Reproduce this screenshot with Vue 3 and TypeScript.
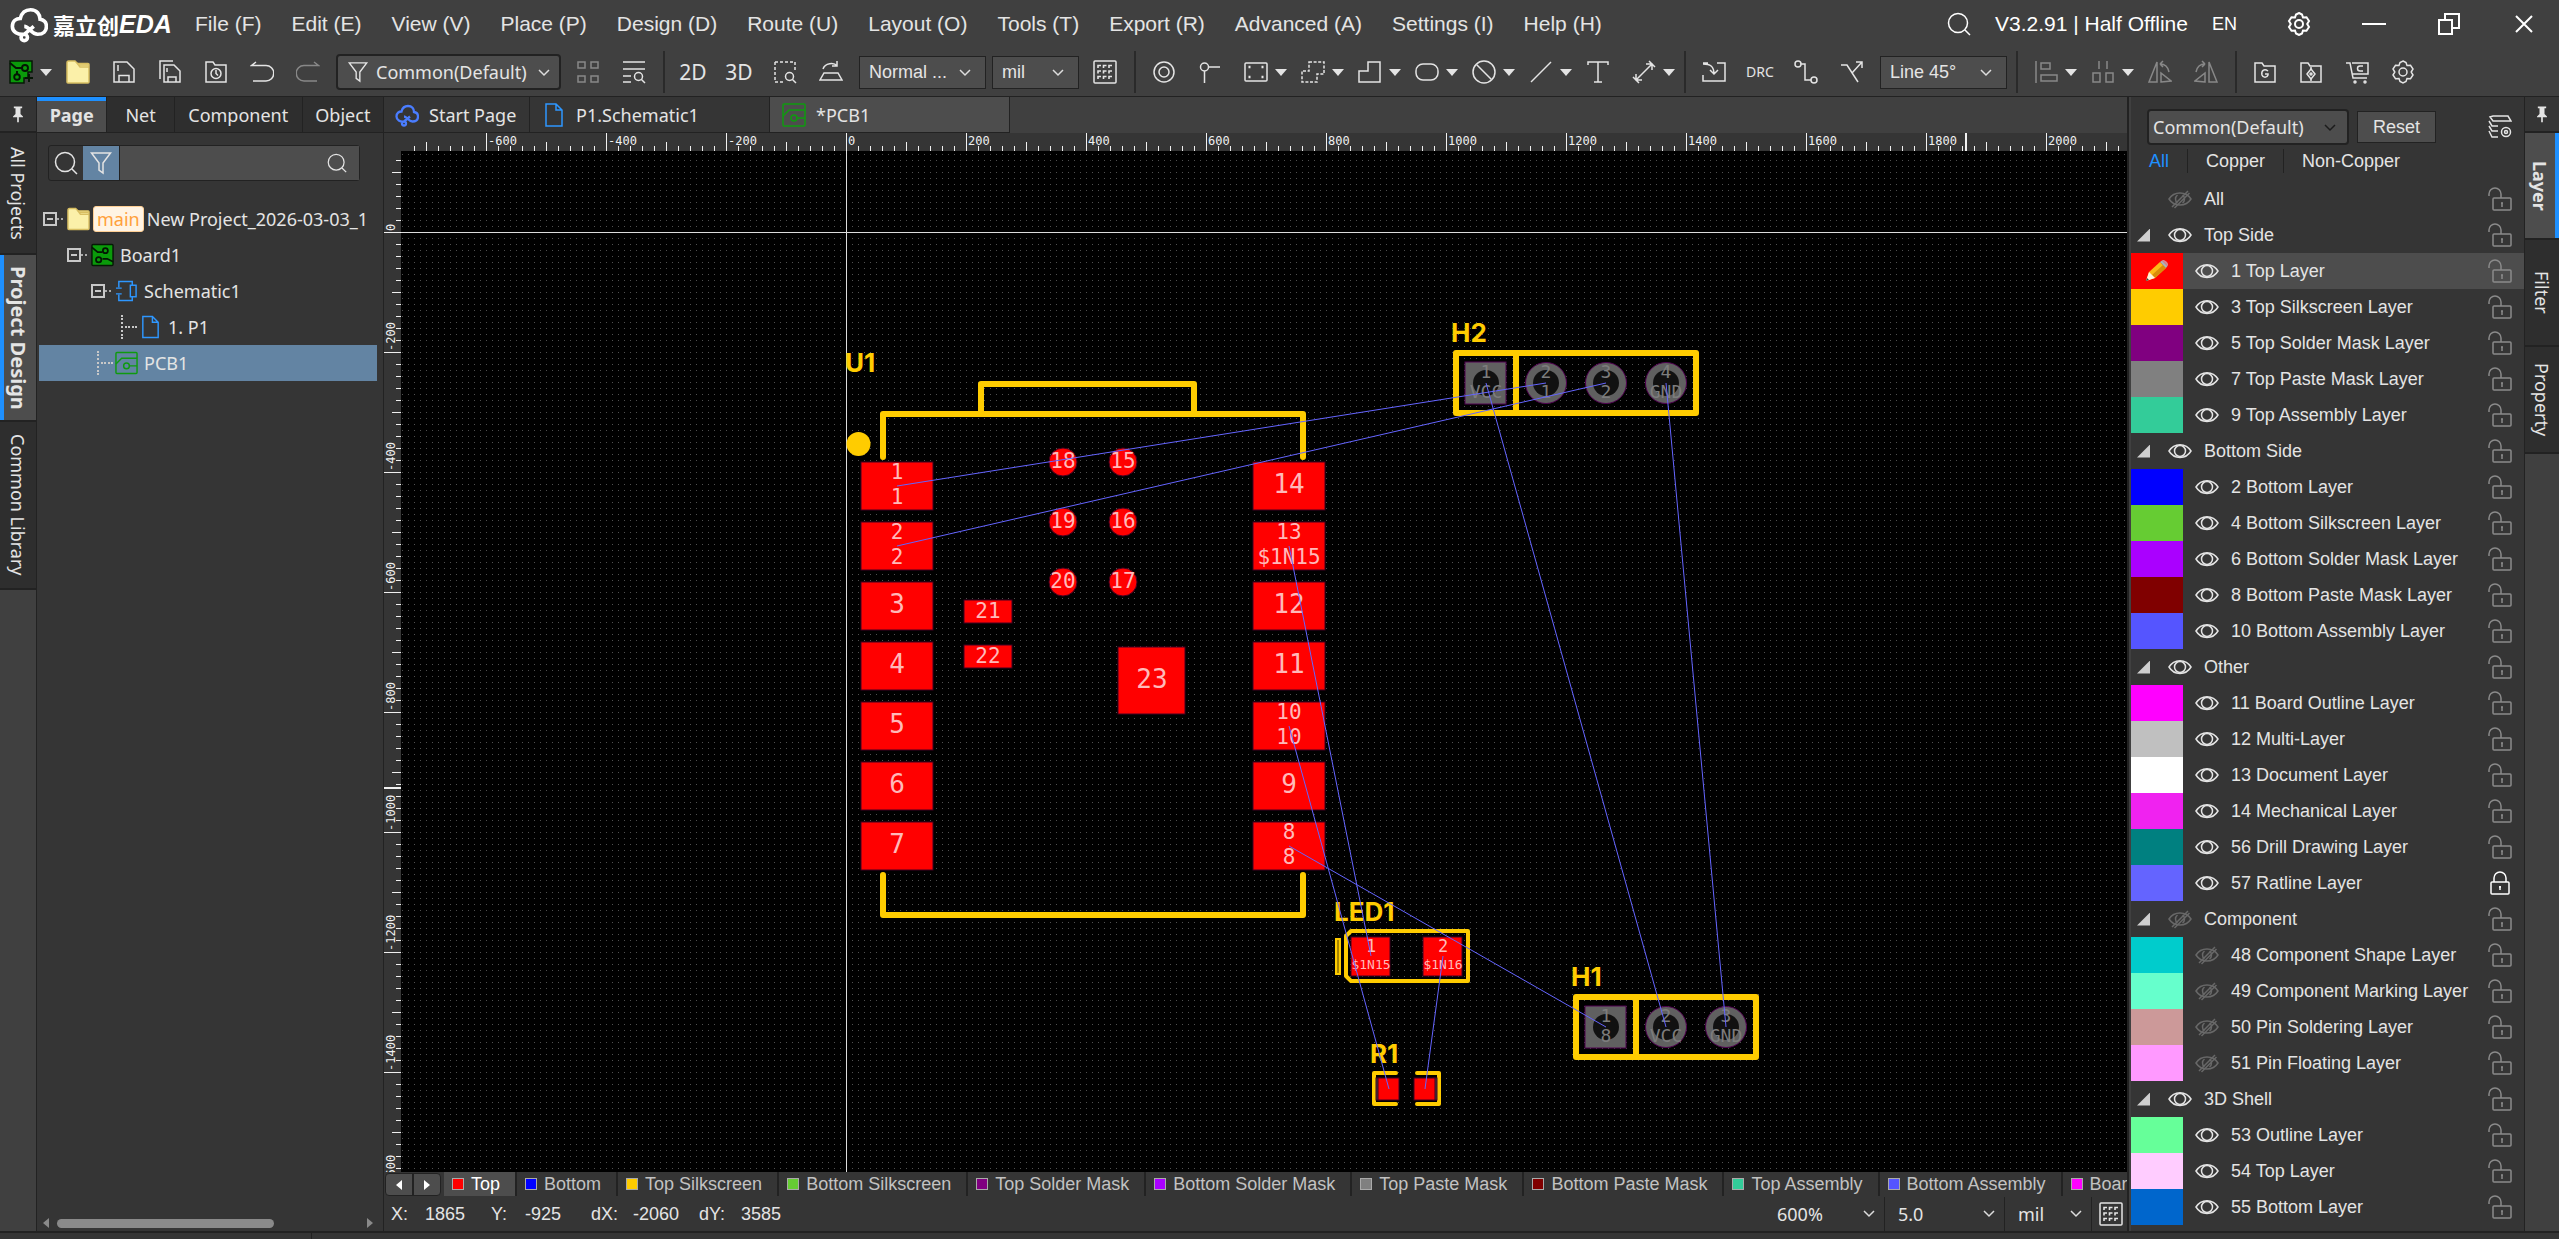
<script setup lang="ts">
import { ref } from 'vue'

const icons: Record<string, string> = {
  board: '<rect x="1" y="1" width="22" height="22" rx="1" fill="#0a9a0a" stroke="#061806"/><g stroke="#041504" stroke-width="1.8"><path d="M1 4l6 5h5M23 19l-6-3h-5"/><circle cx="15" cy="7.500" r="2.600"/><circle cx="8" cy="17" r="2.800"/></g>',
  boardnew: '<path d="M1 1h22v11h-4v6h-4v5H1z" fill="#0a9a0a" stroke="#061806"/><g stroke="#041504" stroke-width="1.900"><path d="M1 3l6 5h6"/><circle cx="16" cy="8" r="3"/><circle cx="8" cy="17" r="2.800"/><path d="M8 14v-3M20 14v8M16 18h8"/></g>',
  folder: '<path d="M1 3c0-1 .6-2 1.600-2h6.400l2.500 2.500H22c.6 0 1 .5 1 1V22c0 .6-.4 1-1 1H2c-.6 0-1-.5-1-1z" fill="#fbf0a9" stroke="#d8be62"/><path d="M12 5h10.500M11 3l3 4h9" stroke="#d8be62"/>',
  save: '<path d="M2 2h13l7 7v13H2zM7 22v-6.500h10V22M6 5v6"/>',
  saveall: '<path d="M6 5h10l6 6v11H6zM10 22v-5h8v5M2 19V1h13M9 8v4"/>',
  history: '<path d="M2 2h7l2 3h11v17H2z"/><circle cx="12" cy="13.500" r="5"/><path d="M12 10v3.500l2 2"/>',
  undo: '<path d="M6 2L1.500 5.500H16a7 7 0 010 15.500H3"/>',
  redo: '<path d="M18 2l4.500 3.500H8A7 7 0 008 21h13"/>',
  filter: '<path d="M2.500 2h19L14 12v10l-4-3v-7z"/>',
  four: '<rect x="2" y="2" width="7" height="6"/><rect x="15" y="2" width="7" height="6"/><rect x="2" y="16" width="7" height="6"/><rect x="15" y="16" width="7" height="6"/>',
  listsearch: '<path d="M1 2h22M1 9h22M1 16h8M1 22h8"/><circle cx="16.500" cy="16.500" r="4"/><path d="M19.500 19.500l3.500 3.500"/>',
  dashsearch: '<path d="M2 2h20v9M2 2v20h8" stroke-dasharray="3 2"/><circle cx="16.500" cy="16.500" r="4"/><path d="M19.500 19.500l3.500 3.500"/>',
  flipboard: '<path d="M5 13h14l4 7H1zM4 9c2-6 11-7 14-3M18 1v5h-5"/>',
  grid: '<rect x="1" y="1" width="22" height="22" rx="1"/><path d="M5 8V5.500h3M10.500 8V5.500h3M16 8V5.500h3M5 13.500V11h3M10.500 13.500V11h3M16 13.500V11h3M5 19v-2.500h3M10.500 19v-2.500h3M16 19v-2.500h3" stroke-width="1.600"/>',
  target: '<circle cx="12" cy="12" r="10"/><circle cx="12" cy="12" r="5"/>',
  pinprobe: '<circle cx="6.500" cy="7" r="4"/><path d="M6.500 11v12M10.500 7H22"/>',
  pad: '<rect x="1" y="3" width="22" height="18" rx="1"/><path d="M4.500 7h2M17.500 7h2M4.500 17h2M17.500 17h2" stroke-width="2.400"/>',
  dashshape: '<path d="M8 2h15v12h-7v8H1V11h7z" stroke-dasharray="3 1.600"/>',
  shape: '<path d="M10 2h12v20H1V11h9z"/>',
  roundrect: '<rect x="1" y="4" width="22" height="16" rx="7"/>',
  forbid: '<circle cx="12" cy="12" r="11"/><path d="M4.500 4.500l15 15"/>',
  line: '<path d="M2 22L22 2"/>',
  text: '<path d="M2 5V2h20v3M12 2v20M8 22h8"/>',
  dimension: '<path d="M4 20L20 4M4 14v6h6M14 4h6v6M1 17l6 6M17 1l6 6"/>',
  import: '<path d="M6 3H1M15 3h8v18H1v-6M1 4c7 0 11 2 11 10M8 10l4 4 4-4"/>',
  route: '<circle cx="4" cy="4" r="3"/><circle cx="20" cy="20" r="3"/><path d="M7 4h4v16h6"/>',
  branch: '<path d="M1 5h6l11 17M12 13L22 2M16 2h6v6"/>',
  align: '<path d="M2 1v22"/><rect x="7" y="3" width="9" height="6"/><rect x="7" y="15" width="16" height="6"/>',
  distribute: '<path d="M8 1v8M16 1v8"/><rect x="2" y="13" width="7" height="9"/><rect x="15" y="13" width="7" height="9"/>',
  fliph: '<path d="M9 2v20H1zM13 22l10-1-10-8zM12 4c5 0 8 3 9 8M12 4l3-3M12 4l3 3"/>',
  flipv: '<path d="M15 2v20h8zM11 22L1 21l10-8zM2 12c1-5 4-8 9-8M11 4L8 1M11 4L8 7"/>',
  gerber: '<path d="M2 3h7l2 3h11v16H2zM15 11c-4-3-7 0-6 4 1 3 5 3 6 0v-1h-3"/>',
  assembly: '<path d="M2 3h7l2 3h11v16H2z"/><path d="M12 9l4 5-4 5-4-5z"/><circle cx="12" cy="14" r="1"/><path d="M12 7v2M12 19v2"/>',
  cart: '<path d="M1 3h4l3 15h14M7 3h16v11H7.500"/><path d="M18 6h-3a2.500 2.500 0 000 5h3"/><circle cx="10" cy="22" r="1"/><circle cx="20" cy="22" r="1"/>',
  gear: '<path d="M12 1l3 1.500 1 3 3.500-.2L22 9l-1.800 3L22 15l-2.500 3.700L16 18.500l-1 3L12 23l-3-1.500-1-3-3.500.2L2 15l1.800-3L2 9l2.500-3.700L8 5.500l1-3z"/><circle cx="12" cy="12" r="4"/>',
  search: '<circle cx="11" cy="11" r="9.500"/><path d="M18 18l5 5"/>',
  min: '<path d="M0 12h24"/>',
  restore: '<path d="M2 8h13v14H2zM8 8V2h14v14h-7"/>',
  close: '<path d="M4 4l16 16M20 4L4 20"/>',
  pin: '<path d="M7 3h10v2h-2v7l3 3v1h-5v6h-2v-6H6v-1l3-3V5H7z" fill="currentColor" stroke="none"/>',
  cloud: '<path d="M9 18.500C5 19 1.500 17 1.500 13.500S4 8.500 6.500 8.500C7.500 4.500 10 3 13 3c4 0 6 3 6 6 3 .5 4 2.500 4 4.500 0 3-2 5-5.500 5-4 0-5.500-5-8.500-5M9 18.500a2 2 0 100 4 2 2 0 000-4zM9 18.500l6-5" stroke-width="2.300"/>',
  doc: '<path d="M4 1h10l6 6v16H4zM14 1v6h6"/>',
  schematic: '<path d="M4 8V2h14v4M4 16v6h14v-4M1 9h6M1 15h6"/><rect x="16" y="6" width="6" height="12"/>',
  pcb: '<rect x="1" y="1" width="22" height="22" rx="1"/><path d="M1 13l6-6h16M15 15h8"/><circle cx="12" cy="15" r="3"/>',
  eye: '<path d="M1 12C6 3.500 18 3.500 23 12 18 20.500 6 20.500 1 12z"/><circle cx="12" cy="12" r="5.500"/>',
  eyeoff: '<path d="M1 12C6 4 18 4 23 12 18 20 6 20 1 12z"/><path d="M9.500 16a5 5 0 010-8M14.500 8a5 5 0 010 8M4 20L20 4M6.500 21L21.500 6"/>',
  unlock: '<rect x="5" y="11" width="18" height="12" rx="1"/><path d="M13 11V7A6 6 0 001 7v2M14 16v4M13 16h2" />',
  lock: '<rect x="3" y="11" width="18" height="12" rx="1"/><path d="M6 11V7a6 6 0 0112 0v4M12 15v4M11 16h2"/>',
  layers: '<path d="M5 1h15l3 5H5L2 2zM1 6l3 5h6M1 11l3 5h6M1 16l3 6h6"/><circle cx="18" cy="17" r="4.500"/><circle cx="18" cy="17" r="1.500"/>',
  chevron: '<path d="M1 2l5 5 5-5"/>',
}

const menus = ['File (F)', 'Edit (E)', 'View (V)', 'Place (P)', 'Design (D)', 'Route (U)', 'Layout (O)', 'Tools (T)', 'Export (R)', 'Advanced (A)', 'Settings (I)', 'Help (H)']

interface Tool { icon?: string; text?: string; caret?: boolean; dim?: boolean; name: string }
const fileTools: Tool[] = [
  { icon: 'folder', name: 'Open' }, { icon: 'save', name: 'Save' }, { icon: 'saveall', name: 'Save all' },
  { icon: 'history', name: 'History' }, { icon: 'undo', name: 'Undo' }, { icon: 'redo', name: 'Redo', dim: true },
]
const findTools: Tool[] = [{ icon: 'four', name: 'Select array', dim: true }, { icon: 'listsearch', name: 'Find' }]
const viewTools: Tool[] = [
  { text: '2D', name: '2D view' }, { text: '3D', name: '3D view' },
  { icon: 'dashsearch', name: 'Find similar' }, { icon: 'flipboard', name: 'Flip board' },
]
const drawTools: Tool[] = [
  { icon: 'target', name: 'Via' }, { icon: 'pinprobe', name: 'Test point' }, { icon: 'pad', name: 'Pad', caret: true },
  { icon: 'dashshape', name: 'Region', caret: true }, { icon: 'shape', name: 'Fill', caret: true },
  { icon: 'roundrect', name: 'Slot', caret: true }, { icon: 'forbid', name: 'Prohibited region', caret: true },
  { icon: 'line', name: 'Line', caret: true }, { icon: 'text', name: 'Text' }, { icon: 'dimension', name: 'Dimension', caret: true },
]
const routeTools: Tool[] = [
  { icon: 'import', name: 'Import changes' }, { text: 'DRC', name: 'Check DRC' },
  { icon: 'route', name: 'Route' }, { icon: 'branch', name: 'Fanout' },
]
const alignTools: Tool[] = [
  { icon: 'align', name: 'Align', caret: true, dim: true }, { icon: 'distribute', name: 'Distribute', caret: true, dim: true },
  { icon: 'fliph', name: 'Rotate left', dim: true }, { icon: 'flipv', name: 'Rotate right', dim: true },
]
const exportTools: Tool[] = [
  { icon: 'gerber', name: 'Gerber' }, { icon: 'assembly', name: 'Pick and place' },
  { icon: 'cart', name: 'Order' }, { icon: 'gear', name: 'Preferences' },
]

interface LayerRow { name: string; color?: string; group?: boolean; all?: boolean; hidden?: boolean; locked?: boolean }
const layers: LayerRow[] = [
  { name: 'All', all: true, hidden: true },
  { name: 'Top Side', group: true },
  { name: '1 Top Layer', color: '#ff0000' },
  { name: '3 Top Silkscreen Layer', color: '#ffcc00' },
  { name: '5 Top Solder Mask Layer', color: '#800080' },
  { name: '7 Top Paste Mask Layer', color: '#808080' },
  { name: '9 Top Assembly Layer', color: '#33cc99' },
  { name: 'Bottom Side', group: true },
  { name: '2 Bottom Layer', color: '#0000ff' },
  { name: '4 Bottom Silkscreen Layer', color: '#66cc33' },
  { name: '6 Bottom Solder Mask Layer', color: '#aa00ff' },
  { name: '8 Bottom Paste Mask Layer', color: '#800000' },
  { name: '10 Bottom Assembly Layer', color: '#5555ff' },
  { name: 'Other', group: true },
  { name: '11 Board Outline Layer', color: '#ff00ff' },
  { name: '12 Multi-Layer', color: '#c0c0c0' },
  { name: '13 Document Layer', color: '#ffffff' },
  { name: '14 Mechanical Layer', color: '#f022f0' },
  { name: '56 Drill Drawing Layer', color: '#008080' },
  { name: '57 Ratline Layer', color: '#6464ff', locked: true },
  { name: 'Component', group: true, hidden: true },
  { name: '48 Component Shape Layer', color: '#00cccc', hidden: true },
  { name: '49 Component Marking Layer', color: '#66ffcc', hidden: true },
  { name: '50 Pin Soldering Layer', color: '#cc9999', hidden: true },
  { name: '51 Pin Floating Layer', color: '#ff99ff', hidden: true },
  { name: '3D Shell', group: true },
  { name: '53 Outline Layer', color: '#66ff99' },
  { name: '54 Top Layer', color: '#ffccff' },
  { name: '55 Bottom Layer', color: '#0066cc' },
]
const activeLayer = ref('1 Top Layer')

const layerTabs = [
  { name: 'Top', color: '#ff0000' }, { name: 'Bottom', color: '#0000ff' },
  { name: 'Top Silkscreen', color: '#ffcc00' }, { name: 'Bottom Silkscreen', color: '#66cc33' },
  { name: 'Top Solder Mask', color: '#800080' }, { name: 'Bottom Solder Mask', color: '#aa00ff' },
  { name: 'Top Paste Mask', color: '#808080' }, { name: 'Bottom Paste Mask', color: '#800000' },
  { name: 'Top Assembly', color: '#33cc99' }, { name: 'Bottom Assembly', color: '#5555ff' },
  { name: 'Board Outline', color: '#ff00ff' },
]

// Board drawing, in pixels from the board origin.
const range = (from: number, to: number) => Array.from({ length: to - from + 1 }, (_, i) => from + i)
const tickLength = (k: number, full: number) => (k % 10 === 0 ? full : k % 5 === 0 ? 9 : 5)
const xTicks = range(-36, 300)
const yTicks = range(-6, 200)
const xLabels = range(-3, 10)
const yLabels = range(0, 8)

interface Pad { x: number; y: number; w: number; h: number; lines: string[] }
const sidePad = (x: number, row: number, ...lines: string[]): Pad => ({ x, y: 230 + row * 60, w: 72, h: 48, lines })
const pads: Pad[] = [
  sidePad(15, 0, '1', '1'), sidePad(15, 1, '2', '2'), sidePad(15, 2, '3'), sidePad(15, 3, '4'),
  sidePad(15, 4, '5'), sidePad(15, 5, '6'), sidePad(15, 6, '7'),
  sidePad(407, 0, '14'), sidePad(407, 1, '13', '$1N15'), sidePad(407, 2, '12'), sidePad(407, 3, '11'),
  sidePad(407, 4, '10', '10'), sidePad(407, 5, '9'), sidePad(407, 6, '8', '8'),
]
const roundPads = [
  { x: 217, y: 230, n: '18' }, { x: 277, y: 230, n: '15' }, { x: 217, y: 290, n: '19' },
  { x: 277, y: 290, n: '16' }, { x: 217, y: 350, n: '20' }, { x: 277, y: 350, n: '17' },
]
const ledPads = [{ x: 505, n: '1', net: '$1N15' }, { x: 577, n: '2', net: '$1N16' }]
const holes = [
  { x: 640, y: 151, n: '1', net: 'VCC', square: true }, { x: 700, y: 151, n: '2', net: '1' },
  { x: 760, y: 151, n: '3', net: '2' }, { x: 820, y: 151, n: '4', net: 'GND' },
  { x: 760, y: 795, n: '1', net: '8', square: true }, { x: 820, y: 795, n: '2', net: 'VCC' },
  { x: 880, y: 795, n: '3', net: 'GND' },
]
const designators = [
  { t: 'U1', x: -1, y: 140 }, { t: 'H2', x: 605, y: 110 }, { t: 'LED1', x: 488, y: 689 },
  { t: 'H1', x: 725, y: 754 }, { t: 'R1', x: 524, y: 831 },
]
const ratlines = [
  [51, 254, 700, 151], [51, 314, 760, 151], [443, 314, 525, 724], [443, 494, 543, 857],
  [443, 614, 760, 795], [640, 151, 820, 795], [820, 151, 880, 795], [597, 724, 579, 857],
]
</script>

<template>
  <div class="app">
    <header class="titlebar">
      <div class="logo">
        <svg class="logo-cloud" viewBox="0 0 24 24" v-html="icons.cloud"></svg>
        <span class="logo-cn">嘉立创</span><span class="logo-eda">EDA</span>
      </div>
      <nav class="menus">
        <button v-for="m in menus" :key="m" type="button">{{ m }}</button>
      </nav>
      <div class="title-right">
        <button type="button" aria-label="Search"><svg class="ic" viewBox="0 0 24 24" v-html="icons.search"></svg></button>
        <span class="version">V3.2.91 | Half Offline</span>
        <button type="button" class="lang">EN</button>
        <button type="button" aria-label="Settings" class="win"><svg class="ic bold" viewBox="0 0 24 24" v-html="icons.gear"></svg></button>
        <button type="button" aria-label="Minimize" class="win"><svg class="ic bold" viewBox="0 0 24 24" v-html="icons.min"></svg></button>
        <button type="button" aria-label="Restore" class="win"><svg class="ic bold" viewBox="0 0 24 24" v-html="icons.restore"></svg></button>
        <button type="button" aria-label="Close" class="win"><svg class="ic bold" viewBox="0 0 24 24" v-html="icons.close"></svg></button>
      </div>
    </header>

    <div class="toolbar">
      <button type="button" class="tool new" aria-label="New"><svg class="ic" viewBox="0 0 24 24" v-html="icons.boardnew"></svg><i class="caret"></i></button>
      <button v-for="t in fileTools" :key="t.name" type="button" class="tool" :class="{ dim: t.dim }" :aria-label="t.name"><svg class="ic" viewBox="0 0 24 24" v-html="icons[t.icon!]"></svg></button>
      <label class="pick filterpick">
        <svg class="ic" viewBox="0 0 24 24" v-html="icons.filter"></svg>
        <select aria-label="Filter"><option>Common(Default)</option></select>
        <svg class="chev" viewBox="0 0 12 9" v-html="icons.chevron"></svg>
      </label>
      <button v-for="t in findTools" :key="t.name" type="button" class="tool" :class="{ dim: t.dim }" :aria-label="t.name"><svg class="ic" viewBox="0 0 24 24" v-html="icons[t.icon!]"></svg></button>
      <i class="sep"></i>
      <button v-for="t in viewTools" :key="t.name" type="button" class="tool" :aria-label="t.name">
        <span v-if="t.text" class="tool-text">{{ t.text }}</span>
        <svg v-else class="ic" viewBox="0 0 24 24" v-html="icons[t.icon!]"></svg>
      </button>
      <label class="pick box wide"><select aria-label="View mode"><option>Normal ...</option></select><svg class="chev" viewBox="0 0 12 9" v-html="icons.chevron"></svg></label>
      <label class="pick box narrow"><select aria-label="Unit"><option>mil</option></select><svg class="chev" viewBox="0 0 12 9" v-html="icons.chevron"></svg></label>
      <button type="button" class="tool" aria-label="Grid"><svg class="ic" viewBox="0 0 24 24" v-html="icons.grid"></svg></button>
      <i class="sep"></i>
      <button v-for="t in drawTools" :key="t.name" type="button" class="tool" :class="{ more: t.caret }" :aria-label="t.name"><svg class="ic" viewBox="0 0 24 24" v-html="icons[t.icon!]"></svg><i v-if="t.caret" class="caret"></i></button>
      <i class="sep"></i>
      <button v-for="t in routeTools" :key="t.name" type="button" class="tool" :aria-label="t.name">
        <span v-if="t.text" class="tool-text small">{{ t.text }}</span>
        <svg v-else class="ic" viewBox="0 0 24 24" v-html="icons[t.icon!]"></svg>
      </button>
      <label class="pick box wide"><select aria-label="Route corner"><option>Line 45°</option></select><svg class="chev" viewBox="0 0 12 9" v-html="icons.chevron"></svg></label>
      <i class="sep"></i>
      <button v-for="t in alignTools" :key="t.name" type="button" class="tool" :class="{ more: t.caret, dim: t.dim }" :aria-label="t.name"><svg class="ic" viewBox="0 0 24 24" v-html="icons[t.icon!]"></svg><i v-if="t.caret" class="caret"></i></button>
      <i class="sep"></i>
      <button v-for="t in exportTools" :key="t.name" type="button" class="tool" :aria-label="t.name"><svg class="ic" viewBox="0 0 24 24" v-html="icons[t.icon!]"></svg></button>
    </div>

    <main class="body">
      <nav class="rail left">
        <button type="button" class="pin" aria-label="Pin panel"><svg class="ic" viewBox="0 0 24 24" v-html="icons.pin"></svg></button>
        <button type="button" class="vtab t1">All Projects</button>
        <button type="button" class="vtab t2 on">Project Design</button>
        <button type="button" class="vtab t3">Common Library</button>
      </nav>

      <aside class="project">
        <nav class="ptabs">
          <button type="button" class="p1 on">Page</button>
          <button type="button" class="p2">Net</button>
          <button type="button" class="p3">Component</button>
          <button type="button" class="p4">Object</button>
        </nav>
        <div class="searchbar">
          <button type="button" aria-label="Search mode"><svg class="ic" viewBox="0 0 24 24" v-html="icons.search"></svg></button>
          <button type="button" class="on" aria-label="Filter mode"><svg class="ic" viewBox="0 0 24 24" v-html="icons.filter"></svg></button>
          <label><input type="text" aria-label="Filter"><svg class="ic sm" viewBox="0 0 24 24" v-html="icons.search"></svg></label>
        </div>
        <ul class="tree">
          <li class="l0"><i class="expand"></i><svg class="ic" viewBox="0 0 24 24" v-html="icons.folder"></svg><span class="badge">main</span><span>New Project_2026-03-03_1</span></li>
          <li class="l1"><i class="expand"></i><svg class="ic" viewBox="0 0 24 24" v-html="icons.board"></svg><span class="label">Board1</span></li>
          <li class="l2"><i class="expand"></i><svg class="ic blue" viewBox="0 0 24 24" v-html="icons.schematic"></svg><span class="label">Schematic1</span></li>
          <li class="l3"><i class="branch"></i><svg class="ic blue" viewBox="0 0 24 24" v-html="icons.doc"></svg><span class="label">1. P1</span></li>
          <li class="l2 on"><i class="branch"></i><svg class="ic green" viewBox="0 0 24 24" v-html="icons.pcb"></svg><span class="label">PCB1</span></li>
        </ul>
        <div class="hscroll"><i class="arr lft"></i><i class="track"><i class="thumb"></i></i><i class="arr rgt"></i></div>
      </aside>

      <section class="editor">
        <nav class="ftabs">
          <button type="button" class="start"><svg class="ic indigo" viewBox="0 0 24 24" v-html="icons.cloud"></svg>Start Page</button>
          <button type="button" class="file"><svg class="ic blue" viewBox="0 0 24 24" v-html="icons.doc"></svg>P1.Schematic1</button>
          <button type="button" class="file on"><svg class="ic green" viewBox="0 0 24 24" v-html="icons.pcb"></svg>*PCB1</button>
        </nav>
        <svg class="ruler-x">
          <g transform="translate(462 0)">
            <rect v-for="k in xTicks" :key="k" :x="k * 12" :y="18 - tickLength(k, 18)" width="1" :height="tickLength(k, 18)" />
            <text v-for="k in xLabels" :key="'t' + k" :x="k * 120 + 2" y="12">{{ k * 200 }}</text>
            <rect x="1119" y="0" width="2" height="18" />
          </g>
        </svg>
        <div class="stage">
          <svg class="ruler-y">
            <g transform="translate(0 81)">
              <rect v-for="k in yTicks" :key="k" :x="17 - tickLength(k, 17)" :y="k * 12" :width="tickLength(k, 17)" height="1" />
              <text v-for="k in yLabels" :key="'t' + k" :transform="`translate(11 ${k * 120 - 1}) rotate(-90)`">{{ -k * 200 || 0 }}</text>
              <rect x="0" y="555" width="17" height="2" />
            </g>
          </svg>
          <svg class="canvas">
            <defs>
              <pattern id="dots" width="6" height="6" x="445" y="81" patternUnits="userSpaceOnUse">
                <rect width="1" height="1" fill="#505050" />
              </pattern>
            </defs>
            <rect width="100%" height="100%" fill="url(#dots)" />
            <rect x="445" y="0" width="1" height="100%" fill="#dcdcdc" />
            <rect x="0" y="81" width="100%" height="1" fill="#dcdcdc" />
            <g transform="translate(445 81)">
              <g class="silk">
                <path d="M37 225V182H457V225M135 182V152H348V182M37 643V683H457V643" />
                <rect x="610" y="121" width="240" height="60" /><path d="M670 121V181" />
                <rect x="730" y="765" width="180" height="60" /><path d="M790 765V825" />
                <path class="thin" d="M505 699H622V749H505L500 744V704Z" />
                <path class="thin" d="M550 841H528V872H550M571 841H593V872H571" />
                <rect x="490" y="707" width="4" height="35" class="bar" />
                <circle cx="12.500" cy="212" r="12" class="dot" />
              </g>
              <g class="copper">
                <rect v-for="(p, i) in pads" :key="i" :x="p.x" :y="p.y" :width="p.w" :height="p.h" />
                <circle v-for="p in roundPads" :key="p.n" :cx="p.x" :cy="p.y" r="14" />
                <rect x="118" y="368" width="48" height="23" /><rect x="118" y="413" width="48" height="23" />
                <rect x="272" y="415" width="67" height="67" />
                <rect v-for="p in ledPads" :key="p.n" :x="p.x" y="705" width="39" height="39" />
                <rect x="530" y="846" width="4" height="22" class="mask" /><rect x="587" y="846" width="4" height="22" class="mask" />
                <rect x="532" y="846" width="21" height="22" /><rect x="568" y="846" width="21" height="22" />
              </g>
              <g class="padtext">
                <template v-for="(p, i) in pads" :key="i">
                  <text v-if="p.lines.length === 1" :x="p.x + 36" :y="p.y + 31" class="big">{{ p.lines[0] }}</text>
                  <template v-else>
                    <text :x="p.x + 36" :y="p.y + 17">{{ p.lines[0] }}</text>
                    <text :x="p.x + 36" :y="p.y + 42">{{ p.lines[1] }}</text>
                  </template>
                </template>
                <text v-for="p in roundPads" :key="p.n" :x="p.x" :y="p.y + 6">{{ p.n }}</text>
                <text x="142" y="386">21</text><text x="142" y="431">22</text>
                <text x="306" y="456" class="big">23</text>
                <template v-for="p in ledPads" :key="p.n">
                  <text :x="p.x + 20" y="720" class="mid">{{ p.n }}</text>
                  <text :x="p.x + 20" y="737" class="tiny">{{ p.net }}</text>
                </template>
              </g>
              <g v-for="(h, i) in holes" :key="i" class="hole">
                <rect v-if="h.square" :x="h.x - 21" :y="h.y - 21" width="41" height="42" />
                <circle v-else :cx="h.x" :cy="h.y" r="20.500" />
                <circle :cx="h.x" :cy="h.y" r="13" class="drill" />
                <text :x="h.x" :y="h.y - 5">{{ h.n }}</text>
                <text :x="h.x" :y="h.y + 15">{{ h.net }}</text>
              </g>
              <text v-for="d in designators" :key="d.t" :x="d.x" :y="d.y" class="designator">{{ d.t }}</text>
              <g class="rat"><line v-for="(r, i) in ratlines" :key="i" :x1="r[0]" :y1="r[1]" :x2="r[2]" :y2="r[3]" /></g>
            </g>
          </svg>
        </div>
        <div class="ltabs">
          <div class="nudge"><button type="button" aria-label="Scroll left"><i class="arr lft"></i></button><button type="button" aria-label="Scroll right"><i class="arr rgt"></i></button></div>
          <button v-for="(t, i) in layerTabs" :key="t.name" type="button" class="ltab" :class="{ on: i === 0 }"><i class="sw" :style="{ background: t.color }"></i>{{ t.name }}</button>
        </div>
        <div class="status">
          <span class="k x">X:</span><span class="v">1865</span>
          <span class="k y">Y:</span><span class="v">-925</span>
          <span class="k d">dX:</span><span class="v">-2060</span>
          <span class="k d">dY:</span><span class="v">3585</span>
          <label class="pick flat zoom"><select aria-label="Zoom"><option>600%</option></select><svg class="chev" viewBox="0 0 12 9" v-html="icons.chevron"></svg></label>
          <label class="pick flat snap"><select aria-label="Snap size"><option>5.0</option></select><svg class="chev" viewBox="0 0 12 9" v-html="icons.chevron"></svg></label>
          <label class="pick flat unit"><select aria-label="Status unit"><option>mil</option></select><svg class="chev" viewBox="0 0 12 9" v-html="icons.chevron"></svg></label>
          <button type="button" class="gridbtn" aria-label="Grid settings"><svg class="ic" viewBox="0 0 24 24" v-html="icons.grid"></svg></button>
        </div>
      </section>

      <aside class="layerpanel">
        <div class="lhead">
          <label class="pick preset"><select aria-label="Layer preset"><option>Common(Default)</option></select><svg class="chev dark" viewBox="0 0 12 9" v-html="icons.chevron"></svg></label>
          <button type="button" class="reset">Reset</button>
          <button type="button" class="lset" aria-label="Layer settings"><svg class="ic" viewBox="0 0 24 24" v-html="icons.layers"></svg></button>
        </div>
        <nav class="lfilter">
          <button type="button" class="on">All</button><button type="button">Copper</button><button type="button">Non-Copper</button>
        </nav>
        <ul class="layers">
          <li v-for="l in layers" :key="l.name" :class="{ on: l.name === activeLayer }" @click="l.color && (activeLayer = l.name)">
            <i v-if="l.color" class="swatch" :style="{ background: l.color }">
              <svg v-if="l.name === activeLayer" class="pencil" viewBox="0 0 24 24">
                <path d="M1 22l3-9L15 3l6 6L10 19z" fill="#fbb917" /><path d="M7 16L18 6l3 3L10 19z" fill="#d98b0b" />
                <path d="M1 22l3-9 6 6z" fill="#fff0dc" /><path d="M1 22l1-3 2 2z" fill="#3a3a3a" />
                <path d="M15 3l2-1.500 5.500 5.500L21 9z" fill="#a8b4bc" /><path d="M17 1.500C19-.5 25 5 22.500 7z" fill="#d98a94" />
              </svg>
            </i>
            <i v-else class="fold" :class="{ none: l.all }"></i>
            <button type="button" class="eye" :class="{ off: l.hidden }" :aria-label="'Show ' + l.name"><svg class="ic" viewBox="0 0 24 24" v-html="l.hidden ? icons.eyeoff : icons.eye"></svg></button>
            <span>{{ l.name }}</span>
            <button type="button" class="lock" :class="{ locked: l.locked }" :aria-label="'Lock ' + l.name"><svg class="ic" viewBox="0 0 24 24" v-html="l.locked ? icons.lock : icons.unlock"></svg></button>
          </li>
        </ul>
      </aside>

      <nav class="rail right">
        <button type="button" class="pin" aria-label="Pin panel"><svg class="ic" viewBox="0 0 24 24" v-html="icons.pin"></svg></button>
        <button type="button" class="vtab on">Layer</button>
        <button type="button" class="vtab">Filter</button>
        <button type="button" class="vtab">Property</button>
      </nav>
    </main>
    <footer class="dock"><i></i></footer>
  </div>
</template>

<style>
body { background: #404040; }
svg.ic { width: 24px; height: 24px; fill: none; stroke: currentColor; stroke-width: 1.5; flex: none; display: block; }
</style>

<style scoped>
.app {
  --bar: #404040; --panel: #353535; --on: #4d4d4d; --off: #2e2e2e; --edge: #222; --fg: #e4e4e4; --blue: #1e90ff;
  --ui: "Noto Sans", sans-serif;
  display: flex; flex-direction: column; min-height: 100vh; background: var(--bar); color: var(--fg);
  font: 18px/24px "Liberation Sans", Arial, sans-serif; white-space: nowrap; overflow: hidden;
}
.app, .app *, .app *::before, .app *::after { box-sizing: border-box; }
button { border: 0; padding: 0; margin: 0; background: none; color: inherit; font: inherit; white-space: nowrap; }
ul { list-style: none; margin: 0; padding: 0; }
svg.bold { stroke-width: 2; }
svg.sm { width: 20px; height: 20px; }
svg.blue { color: #2e97ff; }
svg.green { color: #0f9a0f; }
svg.indigo { color: #4a7dff; }

.titlebar { display: flex; align-items: center; height: 48px; padding: 0 23px 0 10px; }
.logo { display: flex; align-items: center; width: 170px; color: #fff; }
.logo-cloud { width: 38px; height: 38px; fill: none; stroke: currentColor; margin-right: 5px; }
.logo-cn { font: 700 22px/30px "Noto Sans CJK SC", sans-serif; }
.logo-eda { font: italic 700 25px/30px "Liberation Sans", Arial, sans-serif; }
.menus { display: flex; font-size: 21px; }
.menus button { padding: 0 15px; }
.title-right { display: flex; align-items: center; margin-left: auto; color: #fff; font-size: 21px; }
.version { margin: 0 24px; }
.lang { font-size: 18px; margin-right: 24px; }
.win { width: 24px; margin-left: 51px; }
.lang + .win { margin-left: 26px; }

.toolbar { display: flex; align-items: center; height: 49px; border-bottom: 1px solid var(--edge); }
.tool { display: flex; align-items: center; justify-content: center; width: 46px; height: 40px; flex: none; }
.tool.new { width: 55px; padding-left: 9px; justify-content: flex-start; gap: 7px; }
.tool.more { width: 57px; padding-left: 11px; justify-content: flex-start; gap: 7px; }
.tool.dim svg { color: #888; }
.tool-text { font: 21px/24px var(--ui); }
.tool-text.small { font-size: 14px; }
.caret { width: 0; height: 0; border: 6px solid transparent; border-top: 7px solid #e4e4e4; border-bottom: 0; }
.sep { width: 2px; height: 42px; background: #2a2a2a; margin: 0 5px 0 6px; flex: none; }
.pick { display: flex; align-items: center; position: relative; background: var(--on); border: 1px solid var(--edge); flex: none; font-size: 18px; }
.pick select { appearance: none; border: 0; background: none; color: inherit; font: inherit; width: 100%; height: 100%; padding: 0; margin: 0; }
.chev { position: absolute; right: 14px; top: 0; bottom: 0; margin: auto 0; width: 12px; height: 9px; fill: none; stroke: #ddd; stroke-width: 1.5; pointer-events: none; }
.chev.dark { stroke: #1c1c1c; }
.filterpick { width: 225px; height: 36px; margin: 0 4px 0 5px; padding-left: 9px; gap: 7px; border: 2px solid var(--edge); border-radius: 4px; font-family: var(--ui); }
.filterpick .chev { right: 9px; }
.filterpick svg.ic { width: 22px; }
.box { height: 33px; padding-left: 9px; }
.box.wide { width: 127px; margin: 0 3px 0 5px; }
.box.narrow { width: 87px; margin: 0 3px; }

.body { display: flex; flex: 1; }
.rail { display: flex; flex-direction: column; font-family: var(--ui); background: var(--bar); }
.rail.left { width: 37px; border-right: 1px solid var(--edge); }
.rail.right { width: 35px; border-left: 1px solid var(--edge); }
.pin { display: flex; align-items: center; justify-content: center; height: 36px; background: var(--panel); border-bottom: 2px solid var(--edge); }
.pin svg.ic { width: 20px; height: 20px; }
.vtab { writing-mode: vertical-rl; background: var(--off); border-bottom: 2px solid var(--edge); width: 100%; display: flex; align-items: center; justify-content: center; height: 107px; }
.t1 { height: 122px; } .t2 { height: 167px; } .t3 { height: 168px; }
.vtab.on { background: var(--on); font-weight: 700; }
.left .vtab.on { box-shadow: inset 4px 0 0 var(--blue); font-size: 20px; }
.right .vtab.on { box-shadow: inset -4px 0 0 var(--blue); padding-right: 4px; }

.project { display: flex; flex-direction: column; width: 347px; background: var(--panel); border-right: 1px solid var(--edge); }
.ptabs { display: flex; height: 36px; border-bottom: 1px solid var(--edge); font-family: var(--ui); }
.ptabs button { background: var(--off); border-right: 1px solid var(--edge); }
.ptabs .p1 { flex: 70; } .ptabs .p2 { flex: 67; } .ptabs .p3 { flex: 128; } .ptabs .p4 { flex: 81; border-right: 0; }
.ptabs button.on { background: var(--on); box-shadow: inset 0 4px 0 var(--blue); font-weight: 700; }
.searchbar { display: flex; height: 36px; margin: 12px 23px 0 11px; border: 1px solid var(--edge); border-radius: 3px; }
.searchbar button { width: 34px; display: flex; align-items: center; justify-content: center; flex: none; }
.searchbar button.on { width: 36px; background: #6384a3; }
.searchbar label { display: flex; flex: 1; min-width: 0; align-items: center; background: var(--on); border-left: 1px solid var(--edge); padding-right: 12px; }
.searchbar input { flex: 1; width: 0; min-width: 0; height: 100%; border: 0; background: none; color: inherit; font: inherit; }
.tree { margin: 20px 6px 0 2px; font-family: var(--ui); overflow: hidden; }
.tree li { display: flex; align-items: center; height: 36px; }
.l0 { padding-left: 4px; } .l1 { padding-left: 28px; } .l2 { padding-left: 52px; } .l3 { padding-left: 76px; }
.tree li.on { background: #6384a3; }
.tree svg.ic { width: 23px; }
.label { margin-left: 6px; }
.badge { background: #fff4e4; border: 1px solid #ffcf94; border-radius: 3px; color: #ffa13b; height: 26px; padding: 0 3px; margin: 0 3px; }
.expand { width: 14px; height: 14px; margin-right: 10px; border: 2px solid #c8c8c8; position: relative; flex: none; }
.expand::before { content: ""; position: absolute; left: 2px; top: 4px; width: 6px; height: 2px; background: #c8c8c8; }
.expand::after { content: ""; position: absolute; left: 12px; top: 4px; width: 6px; border-top: 2px dotted #aaa; }
.branch { width: 14px; height: 24px; margin: 0 4px 0 6px; border-left: 2px dotted #c8c8c8; position: relative; flex: none; }
.branch::after { content: ""; position: absolute; left: 2px; top: 11px; width: 12px; border-top: 2px dotted #c8c8c8; }
.hscroll { display: flex; align-items: center; gap: 8px; margin: auto 10px 3px 6px; }
.track { flex: 1; }
.thumb { display: block; width: 72%; height: 9px; border-radius: 5px; background: #8a8a8a; }
.arr { display: block; width: 0; height: 0; border: 5px solid transparent; }
.arr.lft { border-right: 6px solid #8a8a8a; border-left: 0; }
.arr.rgt { border-left: 6px solid #8a8a8a; border-right: 0; }

.editor { display: flex; flex-direction: column; flex: 1; min-width: 0; background: var(--panel); overflow: hidden; }
.ftabs { display: flex; height: 36px; background: var(--bar); font-family: var(--ui); }
.ftabs button { display: flex; align-items: center; gap: 10px; background: var(--panel); border-right: 1px solid var(--edge); border-bottom: 1px solid var(--edge); padding-left: 11px; flex: none; }
.start { width: 146px; }
.file { width: 240px; }
.ftabs .file { padding-left: 12px; }
.ftabs .on { background: var(--on); }
.ruler-x { display: block; width: 100%; height: 18px; flex: none; fill: #f0f0f0; font: 12px "DejaVu Sans Mono", monospace; }
.stage { display: flex; flex: 1; min-height: 600px; }
.ruler-y { width: 17px; flex: none; height: auto; fill: #f0f0f0; font: 12px "DejaVu Sans Mono", monospace; }
.canvas { flex: 1; min-width: 0; height: auto; background: #000; }
.silk { fill: none; stroke: #ffcc00; stroke-width: 6; stroke-linecap: round; stroke-linejoin: round; }
.silk .thin { stroke-width: 4; }
.silk .bar { stroke-width: 2; fill: #a88600; stroke-linejoin: miter; }
.silk .dot { fill: #ffcc00; stroke: none; }
.copper { fill: #ff0000; stroke: #400020; stroke-width: 1; }
.copper .mask { fill: #404040; }
.padtext { fill: #ffb9b9; font: 21px "DejaVu Sans Mono", monospace; text-anchor: middle; }
.big { font-size: 26px; }
.mid { font-size: 17px; }
.tiny { font-size: 13px; }
.hole { fill: #606060; stroke: #500050; stroke-width: 1; }
.hole .drill { fill: #111; stroke: none; }
.hole text { fill: #7d7d7d; stroke: none; font: 18px "DejaVu Sans Mono", monospace; text-anchor: middle; }
.designator { fill: #ffcc00; font: 700 26px Inter, sans-serif; }
.rat { stroke: #6464ff; stroke-width: 1; }

.ltabs { display: flex; height: 24px; overflow: hidden; }
.nudge { display: flex; width: 56px; flex: none; margin: 1px 3px 0 1px; border: 1px solid var(--edge); border-radius: 4px; background: var(--on); }
.nudge button { flex: 1; display: flex; align-items: center; justify-content: center; }
.nudge button + button { border-left: 2px solid var(--edge); }
.nudge .arr.lft { border-right-color: #fff; }
.nudge .arr.rgt { border-left-color: #fff; }
.ltab { display: flex; align-items: center; gap: 7px; padding: 0 15px 0 8px; border-right: 2px solid var(--edge); color: #c2c2c2; flex: none; }
.ltab.on { background: var(--on); color: #fff; }
.sw { width: 12px; height: 12px; border: 1px solid #aaa; }
.status { display: flex; align-items: center; height: 35px; padding-left: 7px; }
.k.x, .k.y { width: 34px; } .k.d { width: 42px; }
.v { width: 66px; }
.flat { background: none; border: 0; border-right: 1px solid var(--edge); height: 34px; padding-left: 13px; font-family: var(--ui); }
.flat .chev { right: 9px; }
.zoom { width: 121px; margin-left: auto; }
.snap { width: 120px; }
.unit { width: 87px; }
.gridbtn { margin: 0 4px 0 7px; }

.layerpanel { display: flex; flex-direction: column; width: 397px; background: var(--panel); border-left: 2px solid var(--edge); box-shadow: inset 2px 0 0 var(--bar); padding-left: 2px; }
.lhead { display: flex; align-items: center; height: 52px; padding: 8px 12px 0 16px; }
.preset { width: 202px; height: 36px; border: 2px solid var(--edge); border-radius: 4px; padding-left: 4px; font-family: var(--ui); }
.preset .chev { right: 11px; }
.reset { width: 79px; height: 32px; margin: 0 auto 0 8px; background: var(--on); border: 1px solid var(--edge); }
.lfilter { display: flex; height: 24px; margin-bottom: 8px; }
.lfilter button { padding: 0 18px; border-left: 1px solid var(--edge); }
.lfilter button.on { color: var(--blue); border: 0; }
.layers li { display: flex; align-items: center; height: 36px; padding-right: 12px; }
.layers li.on { background: var(--on); }
.swatch { display: flex; align-items: center; justify-content: center; width: 52px; height: 36px; margin-right: 12px; }
.pencil { width: 24px; height: 24px; }
.fold { width: 13px; height: 13px; margin: 0 18px 0 6px; background: #cfcfcf; clip-path: polygon(100% 0, 100% 100%, 0 100%); }
.fold.none { visibility: hidden; }
.eye { margin-right: 12px; }
.eye.off { color: #686868; }
.lock { margin-left: auto; color: #8a8a8a; }
.lock.locked { color: #fff; }

.dock { height: 8px; background: var(--panel); border-top: 2px solid var(--edge); display: flex; }
.dock i { width: 312px; border-right: 1px solid var(--edge); }
</style>
